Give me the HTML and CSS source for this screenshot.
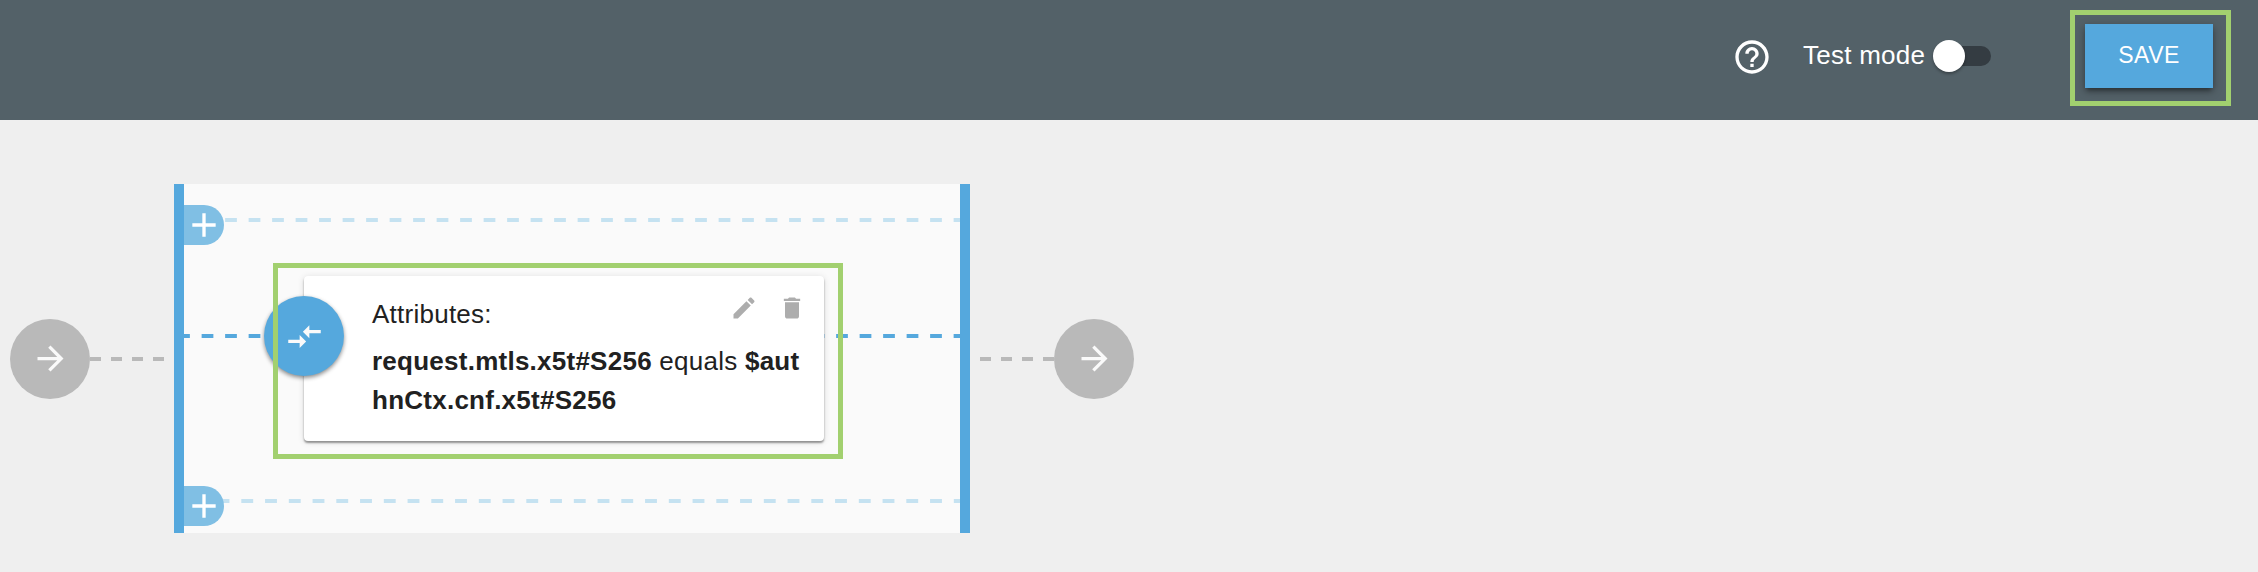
FILE: index.html
```html
<!DOCTYPE html>
<html lang="en">
<head>
<meta charset="utf-8">
<title>Policy flow</title>
<link rel="stylesheet" href="styles.css">
</head>
<body>
<header class="toolbar">
  <svg class="help" viewBox="0 0 24 24"><path d="M11 18h2v-2h-2v2zm1-16C6.48 2 2 6.48 2 12s4.48 10 10 10 10-4.48 10-10S17.52 2 12 2zm0 18c-4.41 0-8-3.59-8-8s3.59-8 8-8 8 3.59 8 8-3.59 8-8 8zm0-14c-2.21 0-4 1.79-4 4h2c0-1.1.9-2 2-2s2 .9 2 2c0 2-3 1.75-3 5h2c0-2.25 3-2.5 3-5 0-2.21-1.79-4-4-4z"/></svg>
  <span class="mode">Test mode</span>
  <span class="switch"><span class="knob"></span></span>
  <div class="save-frame"><button class="save">SAVE</button></div>
</header>
<main class="flow">
  <div class="node"><svg class="icon" viewBox="0 0 24 24"><path d="M12 4l-1.41 1.41L16.17 11H4v2h12.17l-5.58 5.59L12 20l8-8z"/></svg></div>
  <div class="link link-in"></div>
  <section class="panel">
    <div class="lane lane-top"><button class="add" aria-label="Add"><svg viewBox="0 0 24 24"><path d="M19 13h-6v6h-2v-6H5v-2h6V5h2v6h6v2z"/></svg></button></div>
    <div class="lane lane-main">
      <article class="card">
        <div class="badge"><svg class="icon" viewBox="0 0 24 24"><path d="M9.01 14H2v2h7.01v3L13 15l-3.99-4v3zm5.98-1v-3H22V8h-7.01V5L11 9l3.99 4z"/></svg></div>
        <div class="card-head">
          <span class="title">Attributes:</span>
          <span class="actions">
            <svg viewBox="0 0 24 24"><path d="M3 17.25V21h3.75L17.81 9.94l-3.75-3.75L3 17.25zM20.71 7.04c.39-.39.39-1.02 0-1.41l-2.34-2.34c-.39-.39-1.02-.39-1.41 0l-1.83 1.83 3.75 3.75 1.83-1.83z"/></svg>
            <svg viewBox="0 0 24 24"><path d="M6 19c0 1.1.9 2 2 2h8c1.1 0 2-.9 2-2V7H6v12zM19 4h-3.5l-1-1h-5l-1 1H5v2h14V4z"/></svg>
          </span>
        </div>
        <p class="rule"><b>request.mtls.x5t#S256</b> equals <b>$aut<br>hnCtx.cnf.x5t#S256</b></p>
        <div class="highlight"></div>
      </article>
    </div>
    <div class="lane lane-bottom"><button class="add" aria-label="Add"><svg viewBox="0 0 24 24"><path d="M19 13h-6v6h-2v-6H5v-2h6V5h2v6h6v2z"/></svg></button></div>
  </section>
  <div class="link link-out"></div>
  <div class="node"><svg class="icon" viewBox="0 0 24 24"><path d="M12 4l-1.41 1.41L16.17 11H4v2h12.17l-5.58 5.59L12 20l8-8z"/></svg></div>
</main>
</body>
</html>
```
FILE: styles.css
```css
* { box-sizing: border-box; }

body {
  margin: 0;
  height: 572px;
  overflow: hidden;
  background: #efefef;
  color: #212121;
  font: 26px/39px "Liberation Sans", Arial, sans-serif;
  letter-spacing: .25px;
}

svg { display: block; fill: currentColor; }
button { border: 0; padding: 0; font: inherit; color: inherit; }

.toolbar {
  display: flex;
  align-items: flex-start;
  justify-content: flex-end;
  height: 120px;
  padding-right: 27px;
  background: #536168;
  color: #fff;
}
.help { width: 40px; height: 40px; margin: 36.5px 31.5px 0 0; }
.mode { width: 132px; margin-top: 36px; white-space: nowrap; }
.switch {
  width: 56px;
  height: 20px;
  margin: 46px 79px 0 0;
  border-radius: 10px;
  background: #343c42;
}
.knob {
  display: block;
  width: 32px;
  height: 32px;
  margin: -6px 0 0 -2px;
  border-radius: 50%;
  background: #fff;
  box-shadow: 0 2px 3px rgba(0, 0, 0, .3);
}
.save-frame {
  width: 161px;
  height: 96px;
  margin-top: 10px;
  padding: 9px 10px;
  border: 5px solid #a2d06f;
}
.save {
  display: block;
  width: 128px;
  height: 64px;
  padding-bottom: 2px;
  background: #55a8dd;
  color: #fff;
  font-size: 23px;
  letter-spacing: .5px;
  box-shadow: 0 3px 8px rgba(0, 0, 0, .35), 0 4px 4px -2px rgba(0, 0, 0, .3);
}

.flow {
  display: flex;
  align-items: center;
  width: 1134px;
  padding: 64px 0 0 10px;
}
.node, .badge {
  display: grid;
  place-items: center;
  width: 80px;
  height: 80px;
  border-radius: 50%;
  background: #b9b9b9;
  color: #fafafa;
}
.icon { width: 39px; height: 39px; }
.link {
  width: 74px;
  height: 4px;
  background: repeating-linear-gradient(90deg, #b9b9b9 0 10.57px, transparent 10.57px 21.14px);
}
.link-in { margin-right: 10px; }
.link-out { margin-left: 10px; }

.panel {
  width: 796px;
  height: 349px;
  border: solid #55a8dd;
  border-width: 0 10px;
  background: #fafafa;
}
.lane {
  --dash: #c5e2f1;
  background: linear-gradient(90deg, var(--dash) 6px, transparent 6px 17.52px, var(--dash) 17.52px) 0 34px / 23.515px 4px repeat-x;
}
.lane-top { height: 79px; padding-top: 21px; }
.lane-main {
  --dash: #55a8dd;
  height: 206px;
  padding: 13px 136px 0 120px;
  background-position: 0 71px;
}
.lane-bottom {
  height: 64px;
  padding-top: 17px;
  background-position: -8px 30px;
  background-size: 23.76px 4px;
}
.add {
  display: block;
  width: 40px;
  height: 40px;
  border-radius: 0 20px 20px 0;
  background: #80bfe4;
  color: #fff;
}

.card {
  position: relative;
  width: 520px;
  height: 165px;
  padding: 18px 18px 0 68px;
  border-radius: 4px;
  background: #fff;
  box-shadow: 0 2px 2px rgba(0, 0, 0, .38), 0 1px 7px rgba(0, 0, 0, .12);
}
.badge {
  position: absolute;
  left: -40px;
  top: 20px;
  padding-top: 1px;
  background: #55a8dd;
  box-shadow: 0 2px 4px rgba(0, 0, 0, .45);
}
.card-head { display: flex; justify-content: space-between; height: 48px; }
.title { padding-top: 1px; }
.actions { display: flex; gap: 20px; color: #adadad; }
.actions svg { width: 28px; height: 28px; }
.rule { margin: 0; white-space: nowrap; }
.highlight {
  position: absolute;
  left: -31px;
  top: -13px;
  width: 570px;
  height: 196px;
  border: 5px solid #a2d06f;
}
```
